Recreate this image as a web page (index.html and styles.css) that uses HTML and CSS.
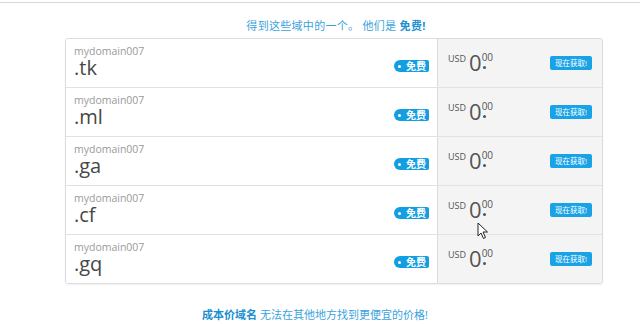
FILE: index.html
```html
<!DOCTYPE html>
<html lang="zh">
<head>
    <meta charset="UTF-8">
    <title>免费域名</title>
    <link rel="stylesheet" href="styles.css">
</head>
<body>
    <div class="topline"></div>
    <div class="wrap">
        <p class="lead">得到这些域中的一个。 他们是 <strong>免费!</strong></p>
        <div class="domains">
            <div class="row">
                <div class="name">
                    <div class="sld">mydomain007</div>
                    <div class="tld">.tk</div>
                    <span class="badge">免费</span>
                </div>
                <div class="buy">
                    <div class="price"><span class="cur">USD</span><span class="big">0</span><span class="cents">00</span></div>
                    <button class="get-btn">现在获取!</button>
                </div>
            </div>
            <div class="row">
                <div class="name">
                    <div class="sld">mydomain007</div>
                    <div class="tld">.ml</div>
                    <span class="badge">免费</span>
                </div>
                <div class="buy">
                    <div class="price"><span class="cur">USD</span><span class="big">0</span><span class="cents">00</span></div>
                    <button class="get-btn">现在获取!</button>
                </div>
            </div>
            <div class="row">
                <div class="name">
                    <div class="sld">mydomain007</div>
                    <div class="tld">.ga</div>
                    <span class="badge">免费</span>
                </div>
                <div class="buy">
                    <div class="price"><span class="cur">USD</span><span class="big">0</span><span class="cents">00</span></div>
                    <button class="get-btn">现在获取!</button>
                </div>
            </div>
            <div class="row">
                <div class="name">
                    <div class="sld">mydomain007</div>
                    <div class="tld">.cf</div>
                    <span class="badge">免费</span>
                </div>
                <div class="buy">
                    <div class="price"><span class="cur">USD</span><span class="big">0</span><span class="cents">00</span></div>
                    <button class="get-btn">现在获取!</button>
                </div>
            </div>
            <div class="row">
                <div class="name">
                    <div class="sld">mydomain007</div>
                    <div class="tld">.gq</div>
                    <span class="badge">免费</span>
                </div>
                <div class="buy">
                    <div class="price"><span class="cur">USD</span><span class="big">0</span><span class="cents">00</span></div>
                    <button class="get-btn">现在获取!</button>
                </div>
            </div>
        </div>
        <p class="foot"><strong>成本价域名</strong> 无法在其他地方找到更便宜的价格!</p>
    </div>

    <svg class="cursor" width="12" height="18" viewBox="0 0 12 18">
        <path d="M1 1 L1 14 L4 11 L6.5 16.5 L8.5 15.5 L6 10 L10.5 10 Z" fill="#fff" stroke="#222" stroke-width="1" stroke-linejoin="round"/>
    </svg>
</body>
</html>
```

FILE: styles.css
```css
body {
    margin: 0;
    font-family: "Open Sans", "Noto Sans CJK SC", sans-serif;
    background-color: #fff;
    position: relative;
    height: 324px;
    overflow: hidden;
}
.topline {
    height: 2px;
    border-bottom: 1px solid #d6d6d6;
}
.wrap {
    width: 538px;
    margin-left: 65px;
}
.lead,
.foot {
    margin: 0;
    text-align: center;
    font-size: 11px;
    color: #39a3dc;
    line-height: 16px;
}
.lead {
    padding-top: 15px;
    padding-bottom: 4px;
    letter-spacing: 0.3px;
    margin-left: 4px;
}
.lead strong,
.foot strong {
    color: #1b8fd0;
}
.foot {
    padding-top: 23px;
    margin-left: -38px;
}
.domains {
    border: 1px solid #dcdcdc;
    border-radius: 3px;
    box-shadow: 0 1px 2px rgba(0, 0, 0, 0.06);
    overflow: hidden;
}
.row {
    display: flex;
    height: 48px;
    border-bottom: 1px solid #e2e2e2;
}
.row:last-child {
    border-bottom: none;
}
.name {
    position: relative;
    width: 363px;
    padding-left: 8px;
    border-right: 1px solid #dcdcdc;
    background-color: #fff;
}
.sld {
    font-size: 10.5px;
    color: #9a9a9a;
    line-height: 12px;
    padding-top: 6px;
}
.tld {
    font-size: 20px;
    color: #474747;
    line-height: 22px;
}
.badge {
    position: absolute;
    right: 8px;
    top: 21px;
    height: 12px;
    line-height: 12px;
    padding: 0 3px 0 12px;
    background-color: #139ee2;
    color: #fff;
    font-size: 10px;
    font-weight: bold;
    border-radius: 6px 2px 2px 6px;
}
.badge::before {
    content: "";
    position: absolute;
    left: 4px;
    top: 4.5px;
    width: 3px;
    height: 3px;
    border-radius: 50%;
    background-color: #fff;
}
.buy {
    flex: 1;
    display: flex;
    justify-content: space-between;
    align-items: flex-start;
    padding: 0 10px 0 10px;
    background-color: #f4f4f4;
}
.price {
    display: flex;
    align-items: flex-start;
    padding-top: 12px;
    color: #555;
}
.cur {
    font-size: 9px;
    line-height: 10px;
    margin-top: 3px;
    margin-right: 3px;
}
.big {
    font-size: 22px;
    line-height: 22px;
    color: #555;
}
.cents {
    position: relative;
    font-size: 10px;
    line-height: 10px;
    margin-top: 1px;
    margin-left: 0;
}
.cents::after {
    content: "";
    position: absolute;
    left: 1px;
    top: 14px;
    width: 3px;
    height: 3px;
    border-radius: 50%;
    background-color: #555;
}
.get-btn {
    margin-top: 17px;
    padding: 0 5px;
    height: 14px;
    line-height: 14px;
    border: none;
    border-radius: 2px;
    background-color: #19a3e6;
    color: #fff;
    font-family: "Open Sans", "Noto Sans CJK SC", sans-serif;
    font-size: 7.5px;
}
.cursor {
    position: absolute;
    left: 477px;
    top: 222px;
}
```
